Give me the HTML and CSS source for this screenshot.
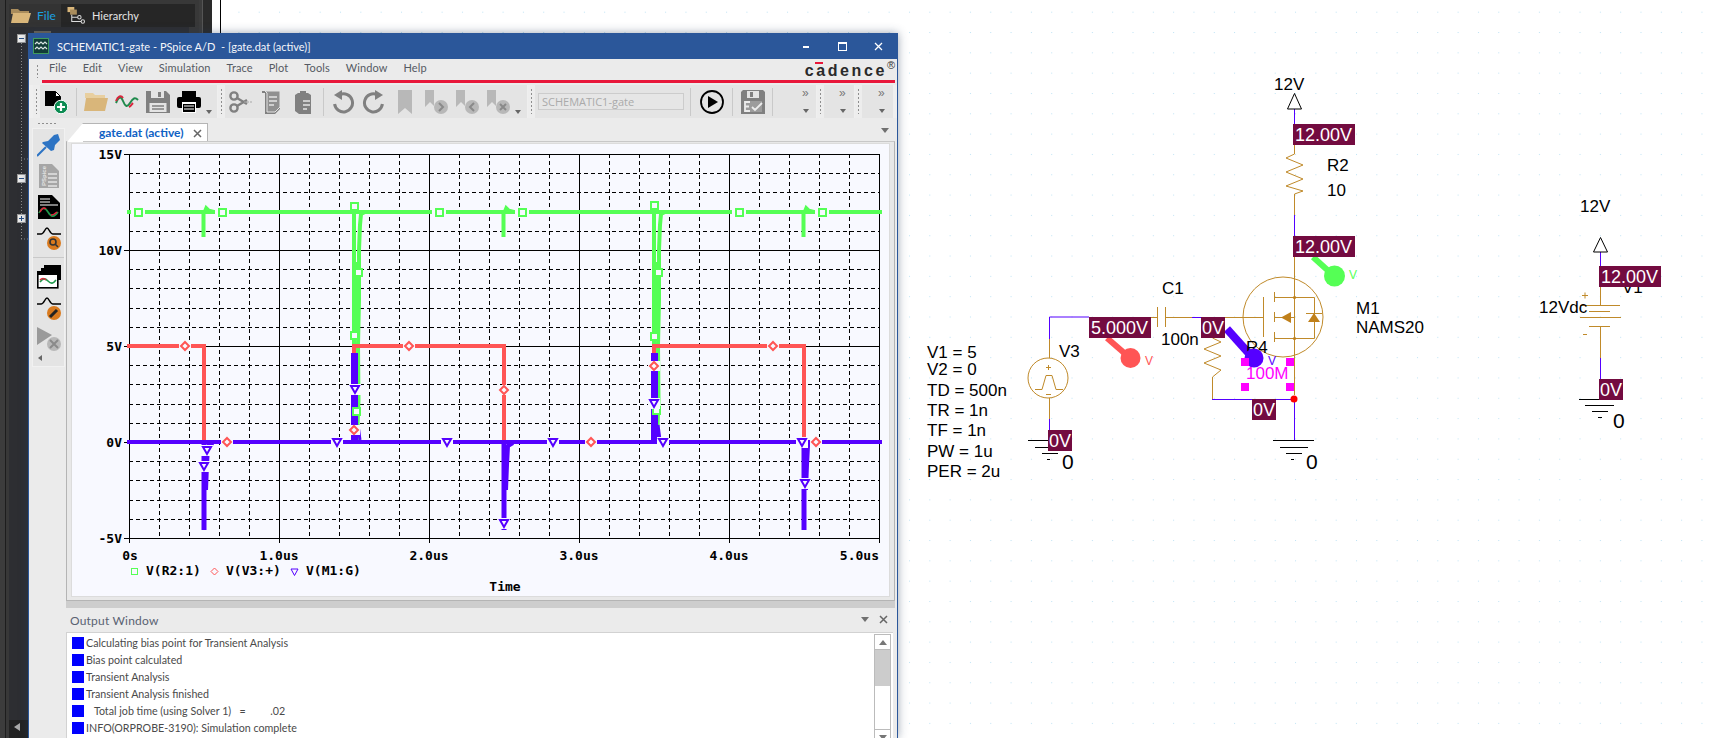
FILE: index.html
```html
<!DOCTYPE html>
<html lang="en">
<head>
<meta charset="utf-8">
<title>SCHEMATIC1-gate - PSpice A/D</title>
<link rel="stylesheet" href="styles.css">
</head>
<body class="page">
<aside class="explorer">
  <div class="explorer-inner">
    <div class="explorer-tabs">
      <div class="ex-tab ex-tab-active">
        <svg class="ex-ico" viewBox="0 0 20 15"><path class="i-folder-back" d="M0 1h7l2 2h9v3H0z"/><path class="i-folder" d="M2 5h18l-3 10H0z"/></svg>
        <span class="ex-file">File</span>
      </div>
      <div class="ex-tab">
        <svg class="ex-ico" viewBox="0 0 20 20"><rect class="i-folder" x="0" y="0" width="8" height="6"/><rect class="i-folder-back" x="3" y="3" width="8" height="6"/><path class="i-tree" d="M5 9v8h11M5 12h7"/><circle class="i-tree" cx="14" cy="12" r="2"/><circle class="i-tree" cx="18" cy="17" r="2"/></svg>
        <span class="ex-hier">Hierarchy</span>
      </div>
    </div>
    <div class="tree">
      <svg class="tree-svg" viewBox="8 27 180 711">
        <rect class="i-folder-dim" x="33" y="31" width="17" height="4"/>
        <path class="tree-line" d="M20.5 43V174M20.5 183V214M20.5 223V239M20 159H28M20 239H28"/>
        <g class="tree-box"><rect x="16.5" y="34.5" width="8" height="8"/><path d="M18 38.5h5"/></g>
        <g class="tree-box"><rect x="16.5" y="174.5" width="8" height="8"/><path d="M18 178.5h5"/></g>
        <g class="tree-box"><rect x="16.5" y="214.5" width="8" height="8"/><path d="M18 218.5h5M20.5 216v5"/></g>
        <rect class="tree-scroll" x="8" y="720" width="180" height="18"/>
        <path class="tree-arrow" d="M19 723v8l-6-4z"/>
      </svg>
    </div>
  </div>
  <div class="explorer-edge"></div>
</aside>

<main class="canvas">
  <svg class="schematic" viewBox="221 0 1492 738">
    <defs>
      <pattern id="dots" x="14.9" y="11.7" width="20.32" height="20.32" patternUnits="userSpaceOnUse"><rect class="dot" width="1" height="1"/></pattern>
    </defs>
    <rect class="sheet" x="221" y="0" width="1492" height="738"/>

    <!-- wires: net colour -->
    <path class="w-net" d="M1294.5 109V124M1294.5 215V236M1049.5 339V317H1089M1192 317.5H1201M1049.5 419V430M1212 399.5H1294.5V440M1600.5 252V266M1600.5 358V379"/>
    <path class="w-part" d="M1294.5 145V154L1286 158L1303 165L1286 172L1303 179L1286 186L1303 191L1294.5 194V215M1294.5 257V395M1151 317.5H1157M1165 317.5H1192M1225 317.5H1263M1157.5 307V327M1165.5 307V327M1049.5 339V358M1049.5 398V419M1212.5 338L1221 342L1204 349L1221 356L1204 363L1221 370L1212.5 377V399"/>
    <path class="w-part" d="M1600.5 287V305M1580 305.5H1620M1589 311.5H1610M1580 317.5H1621M1589 326.5H1610M1600.5 326V358"/>
    <!-- MOSFET -->
    <circle class="w-part" cx="1283" cy="317" r="40"/>
    <path class="w-part" d="M1263.5 297V337M1274.5 292V302M1274.5 312V322M1274.5 332V342M1274 297.5H1314.5V338.5H1274M1274 317.5H1294.5V338M1306 313.5H1322"/>
    <path class="w-fill" d="M1281 317.5L1291 312V323zM1314 313L1308 322H1320z"/>
    <circle class="w-fill" cx="1294.5" cy="297.5" r="1.6"/><circle class="w-fill" cx="1294.5" cy="338.5" r="1.6"/>
    <!-- V3 source -->
    <circle class="w-part" cx="1048" cy="378" r="20"/>
    <path class="w-part" d="M1035 389.5H1042L1046 375.5H1052L1056 389.5H1063M1046 367.5H1051M1048.5 365V370"/>
    <path class="w-part" d="M1046 394.5H1051"/>
    <path class="w-part" d="M1582 295.5H1588M1585 292.5V298.5M1583 334.5H1587"/>
    <circle class="dot-red" cx="1294" cy="399" r="3.5"/>

    <!-- grounds and power symbols -->
    <path class="blk" d="M1273 440.5H1314M1280 447.5H1308M1286 453.5H1302M1291 459.5H1294M1028 440.5H1060M1035 447.5H1050M1042 453.5H1058M1047 459.5H1050M1579 399.5H1600M1585 405.5H1614M1592 411.5H1608M1598 417.5H1602"/>
    <path class="blk-tri" d="M1294.5 93.5L1287.5 109H1301.5zM1600.5 237.5L1593.5 252H1607.5z"/>

    <!-- text -->
    <text class="sc" x="1274" y="90">12V</text>
    <text class="sc" x="1327" y="171">R2</text>
    <text class="sc" x="1327" y="196">10</text>
    <text class="sc" x="1356" y="314">M1</text>
    <text class="sc" x="1356" y="333">NAMS20</text>
    <text class="sc" x="1162" y="294">C1</text>
    <text class="sc" x="1161" y="345">100n</text>
    <text class="sc" x="1059" y="357">V3</text>
    <text class="sc" x="927" y="358">V1 = 5</text>
    <text class="sc" x="927" y="375">V2 = 0</text>
    <text class="sc" x="927" y="396">TD = 500n</text>
    <text class="sc" x="927" y="416">TR = 1n</text>
    <text class="sc" x="927" y="436">TF = 1n</text>
    <text class="sc" x="927" y="457">PW = 1u</text>
    <text class="sc" x="927" y="477">PER = 2u</text>
    <text class="sc sc-big" x="1306" y="469">0</text>
    <text class="sc sc-big" x="1062" y="469">0</text>
    <text class="sc sc-big" x="1613" y="428">0</text>
    <text class="sc" x="1580" y="212">12V</text>
    <text class="sc" x="1539" y="313">12Vdc</text>
    <text class="sc" x="1622" y="293">V1</text>

    <!-- probes -->
    <path class="pr-green" d="M1313 257L1334 276"/><circle class="pf-green" cx="1334.5" cy="276" r="10.5"/>
    <path class="pr-red" d="M1107 338L1130 358"/><circle class="pf-red" cx="1130.5" cy="358" r="10"/>
    <path class="pr-violet" d="M1227 329L1253 358"/>
    <text class="sc" x="1246" y="353">R4</text>
    <circle class="pf-violet" cx="1254" cy="358" r="9.5"/>
    <text class="pt pt-green" x="1349" y="279">V</text>
    <text class="pt pt-red" x="1145" y="365">V</text>
    <text class="pt pt-violet" x="1268" y="365">V</text>

    <!-- selected part -->
    <text class="sc sc-sel" x="1246" y="379">100M</text>
    <rect class="handle" x="1241" y="358" width="8" height="8"/>
    <rect class="handle" x="1286" y="358" width="8" height="8"/>
    <rect class="handle" x="1241" y="383" width="8" height="8"/>
    <rect class="handle" x="1286" y="383" width="8" height="8"/>

    <!-- voltage bubbles -->
    <rect class="bub" x="1293" y="124" width="62" height="21"/><text class="bub-t" x="1295" y="141">12.00V</text>
    <rect class="bub" x="1293" y="236" width="62" height="21"/><text class="bub-t" x="1295" y="253">12.00V</text>
    <rect class="bub" x="1089" y="317" width="62" height="21"/><text class="bub-t" x="1091" y="334">5.000V</text>
    <rect class="bub" x="1201" y="317" width="24" height="21"/><text class="bub-t" x="1202" y="334">0V</text>
    <rect class="bub" x="1252" y="399" width="24" height="21"/><text class="bub-t" x="1253" y="416">0V</text>
    <rect class="bub" x="1048" y="430" width="24" height="21"/><text class="bub-t" x="1049" y="447">0V</text>
    <rect class="bub" x="1599" y="266" width="62" height="21"/><text class="bub-t" x="1601" y="283">12.00V</text>
    <rect class="bub" x="1599" y="379" width="24" height="21"/><text class="bub-t" x="1600" y="396">0V</text>
  </svg>
</main>

<section class="window">
  <header class="titlebar">
    <svg class="app-ico" viewBox="0 0 16 16"><rect class="app-bg" x="0.5" y="0.5" width="15" height="15"/><path class="app-w" d="M2 6l2-2 2 2 2-2 2 2 2-2 2 2M2 11l2-2 2 2 2-2 2 2 2-2 2 2"/></svg>
    <span class="title-text">SCHEMATIC1-gate - PSpice A/D  - [gate.dat (active)]</span>
    <div class="win-btns">
      <span class="btn-min"></span>
      <span class="btn-max"></span>
      <svg class="btn-close" viewBox="0 0 9 9"><path d="M1 1l7 7M8 1l-7 7"/></svg>
    </div>
  </header>

  <nav class="menubar">
    <span class="grip grip-menu"></span>
    <div class="menu-inner">
      <span class="menu-item">File</span><span class="menu-item">Edit</span><span class="menu-item">View</span><span class="menu-item">Simulation</span><span class="menu-item">Trace</span><span class="menu-item">Plot</span><span class="menu-item">Tools</span><span class="menu-item">Window</span><span class="menu-item">Help</span>
      <span class="logo">cadence</span><span class="logo-r">®</span>
    </div>
  </nav>

  <div class="toolbars">
    <div class="tb tb-1">
      <span class="grip"></span>
      <div class="tb-body">
        <span class="cell"><svg class="ico" viewBox="0 0 24 24"><path class="k" d="M1 1h10l6 6v9H1z"/><path class="k-w" d="M11.5 1.500l5 5h-5z"/><circle class="gr-disc" cx="17" cy="17" r="6.800"/><path class="plus" d="M13 17h8M17 13v8"/></svg></span>
        <span class="sep"></span>
        <span class="cell"><svg class="ico" viewBox="0 0 24 24"><path class="i-folder-lt" d="M1 3h8l2 2h10v3H1z"/><path class="i-folder" d="M2 8h22l-3 13H0z"/></svg></span>
        <span class="cell"><svg class="ico" viewBox="0 0 24 24"><path class="wv-g" d="M1 13c3-7 5-7 7-2s4 7 7 2 5-6 8-3"/><path class="wv-r" d="M1 11c2-5 5-6 7-3M14 17c2-1 3-3 4-4"/></svg></span>
        <span class="cell"><svg class="ico" viewBox="0 0 24 24"><path class="g" d="M0 1h20l4 4v18H0z"/><rect class="g-l" x="5" y="1" width="13" height="7"/><rect class="g" x="12" y="2" width="3" height="5"/><rect class="g-l" x="3.500" y="13" width="17" height="9"/><path class="g-s" d="M6 16h12M6 19h12"/></svg></span>
        <span class="cell"><svg class="ico" viewBox="0 0 24 24"><rect class="k" x="5" y="1" width="14" height="6"/><rect class="k" x="0" y="7" width="24" height="11" rx="2"/><rect class="k-wf" x="5" y="12" width="14" height="11"/><rect class="k" x="6" y="14" width="12" height="8"/><path class="k-s" d="M7 16h10M7 19h10"/></svg></span>
        <span class="drop drop-12"></span>
      </div>
    </div>
    <div class="tb tb-2">
      <span class="grip"></span>
      <div class="tb-body">
        <span class="cell"><svg class="ico" viewBox="0 0 24 24"><circle class="g-st" cx="5" cy="6" r="3.600"/><circle class="g-st" cx="5" cy="18" r="3.600"/><path class="g-st" d="M8 8l10 6M8 16l10-6"/><path class="g-st2" d="M15 12h9"/></svg></span>
        <span class="cell cell-copy"><svg class="ico" viewBox="0 0 24 24"><path class="g" d="M2 1h18v18l-5 5H5V3H2z"/><path class="g-lt" d="M5 1h15v16l-5 5H7V3z"/><path class="g-s2" d="M9 7h8M9 11h8M9 15h5"/></svg></span>
        <span class="cell cell-copy"><svg class="ico" viewBox="0 0 24 24"><path class="g" d="M6 3h2V1h6v2h2l3 2v19H7l-4-3V5z"/><path class="g-s2" d="M11 11h7M11 15h7M11 19h4"/></svg></span>
        <span class="sep sep-2"></span>
        <span class="cell"><svg class="ico" viewBox="0 0 24 24"><path class="g-arc" d="M9 4.600A9 9 0 1 1 3.600 14"/><path class="g" d="M11 0v10L3 5z"/></svg></span>
        <span class="cell"><svg class="ico" viewBox="0 0 24 24"><path class="g-arc" d="M15 4.600A9 9 0 1 0 20.400 14"/><path class="g" d="M13 0v10l8-5z"/></svg></span>
        <span class="cell"><svg class="ico" viewBox="0 0 24 24"><path class="bk" d="M5 0h14v24l-7-6-7 6z"/></svg></span>
        <span class="cell"><svg class="ico" viewBox="0 0 24 24"><path class="bk" d="M1 0h9v16l-4-4-5 5z"/><circle class="bk" cx="17" cy="17" r="7"/><path class="bk-a" d="M15 13l4 4-4 4"/></svg></span>
        <span class="cell"><svg class="ico" viewBox="0 0 24 24"><path class="bk" d="M1 0h9v16l-4-4-5 5z"/><circle class="bk" cx="17" cy="17" r="7"/><path class="bk-a" d="M19 13l-4 4 4 4"/></svg></span>
        <span class="cell"><svg class="ico" viewBox="0 0 24 24"><path class="bk" d="M1 0h9v16l-4-4-5 5z"/><circle class="bk" cx="17" cy="17" r="7"/><path class="bk-a" d="M14 14l6 6M20 14l-6 6"/></svg></span>
        <span class="drop drop-10"></span>
      </div>
    </div>
    <div class="tb tb-3">
      <span class="grip"></span>
      <div class="tb-body">
        <span class="combo">SCHEMATIC1-gate</span>
        <span class="sep sep-3"></span>
        <span class="cell cell-play"><svg class="ico" viewBox="0 0 24 24"><circle class="play-c" cx="12" cy="12" r="11"/><path class="k" d="M8 6l10 6-10 6z"/></svg></span>
        <span class="sep sep-4"></span>
        <span class="cell cell-e"><svg class="ico" viewBox="0 0 24 24"><path class="g" d="M2 0h20l2 2v22H0V2z"/><rect class="g-l" x="6" y="1" width="12" height="7"/><rect class="g" x="9" y="2" width="3" height="5"/><path class="g-l2" d="M3 11h18v11H3z"/><path class="g-e" d="M9 12H4v9h5M4 16.500h4M11 17l3 3 7-7"/></svg></span>
        <span class="sep sep-5"></span>
        <span class="overflow ov-3"><span class="chev">»</span><span class="drop"></span></span>
      </div>
    </div>
    <div class="tb tb-4">
      <span class="grip"></span>
      <div class="tb-body tb-narrow"><span class="overflow"><span class="chev">»</span><span class="drop"></span></span></div>
    </div>
    <div class="tb tb-5">
      <span class="grip"></span>
      <div class="tb-body tb-narrow"><span class="overflow"><span class="chev">»</span><span class="drop"></span></span></div>
    </div>
  </div>

  <div class="workspace">
    <div class="dock">
      <span class="grip-h"></span>
      <div class="dock-panel">
        <svg class="d-ico" viewBox="0 0 24 24"><path class="pin" d="M0 23L9 14"/><path class="pin-f" d="M6 9l5-1 6-6 4-1 2 6-5 5-1 5-3 1-9-8z"/></svg>
        <svg class="d-ico" viewBox="0 0 24 24"><path class="g-doc" d="M2 0h13l7 7v17H2z"/><path class="g-s2" d="M11 10h9M11 14h9M11 18h9M11 22h9"/><text class="doc-t" x="-22" y="9" transform="rotate(-90)">PSpice</text></svg>
        <svg class="d-ico" viewBox="0 0 24 24"><path class="k" d="M1 0h14l8 8v16H1z"/><path class="k-ln" d="M3 4h10M3 7h10M3 10h18"/><path class="wv-g2" d="M2 18c3-6 6-6 9-1s6 6 10 0"/><path class="wv-r2" d="M3 17c2-4 4-5 6-3M14 20c2 0 4-1 6-3"/></svg>
        <svg class="d-ico" viewBox="0 0 24 24"><path class="wv-k" d="M0 8h4c3 0 4-6 6-6s3 6 6 6h8"/><circle class="or" cx="17" cy="17" r="7"/><circle class="or-k" cx="16" cy="16" r="3"/><path class="or-k" d="M18 18l3 3"/></svg>
        <span class="dock-sep"></span>
        <svg class="d-ico" viewBox="0 0 24 24"><rect class="k" x="7" y="0" width="17" height="15"/><rect class="k" x="4" y="3" width="17" height="15"/><rect class="k-wb" x="0.800" y="6.800" width="20" height="16"/><path class="k-ln2" d="M1 7h20v3H1z"/><path class="wv-g3" d="M3 17c3-4 5-4 8-1s5 3 8-1"/><path class="wv-r3" d="M3 15c2-2 4-2 6 0"/></svg>
        <svg class="d-ico" viewBox="0 0 24 24"><path class="wv-k" d="M0 8h4c3 0 4-6 6-6s3 6 6 6h8"/><circle class="or" cx="17" cy="17" r="7"/><path class="or-k2" d="M13 21l7-7"/></svg>
        <svg class="d-ico" viewBox="0 0 24 24"><path class="bk-d" d="M0 0l15 8-15 10z"/><circle class="bk" cx="17" cy="17" r="7"/><path class="bk-a" d="M13 13l8 8M21 13l-8 8"/></svg>
        <span class="dock-more"></span>
      </div>
    </div>

    <div class="content">
      <div class="tabstrip">
        <div class="tab">
          <span class="tab-label">gate.dat (active)</span>
          <svg class="tab-x" viewBox="0 0 9 9"><path d="M1 1l7 7M8 1l-7 7"/></svg>
        </div>
        <span class="tab-menu"></span>
      </div>

      <div class="plot-frame">
        <svg class="plot" viewBox="72 144 817 452">
          <defs>
            <g id="m-s"><rect class="halo" x="-7" y="-6" width="14" height="12"/><rect class="mk-g" x="-3.5" y="-3.5" width="7" height="7"/></g>
            <g id="m-sv"><rect class="mk-g" x="-3.5" y="-3.5" width="7" height="7"/></g>
            <g id="m-d"><rect class="halo" x="-6" y="-5" width="12" height="10"/><path class="mk-r" d="M0-4L4 0 0 4-4 0z"/></g>
            <g id="m-t"><rect class="halo" x="-6" y="-5" width="12" height="11"/><path class="mk-v" d="M-4-3H4L0 4z"/></g>
          </defs>
          <path class="grid-d" d="M159.5 154V538M189.5 154V538M219.5 154V538M249.5 154V538M309.5 154V538M339.5 154V538M369.5 154V538M399.5 154V538M459.5 154V538M489.5 154V538M519.5 154V538M549.5 154V538M609.5 154V538M639.5 154V538M669.5 154V538M699.5 154V538M759.5 154V538M789.5 154V538M819.5 154V538M849.5 154V538"/>
          <path class="grid-d" d="M129 173.5H879M129 192.5H879M129 212.5H879M129 231.5H879M129 269.5H879M129 288.5H879M129 308.5H879M129 327.5H879M129 365.5H879M129 384.5H879M129 404.5H879M129 423.5H879M129 461.5H879M129 480.5H879M129 500.5H879M129 519.5H879"/>
          <path class="grid-s" d="M124 154.5H879.5V543M124 250.5H879M124 346.5H879M124 442.5H879M124 538.5H879.5M129.5 154V543M279.5 154V543M429.5 154V543M579.5 154V543M729.5 154V543"/>

          <text class="ax ax-e" x="122" y="159">15V</text>
          <text class="ax ax-e" x="122" y="255">10V</text>
          <text class="ax ax-e" x="122" y="351">5V</text>
          <text class="ax ax-e" x="122" y="447">0V</text>
          <text class="ax ax-e" x="122" y="543">-5V</text>
          <text class="ax ax-m" x="130" y="560">0s</text>
          <text class="ax ax-m" x="279" y="560">1.0us</text>
          <text class="ax ax-m" x="429" y="560">2.0us</text>
          <text class="ax ax-m" x="579" y="560">3.0us</text>
          <text class="ax ax-m" x="729" y="560">4.0us</text>
          <text class="ax ax-e" x="879" y="560">5.0us</text>

          <rect class="lg-g" x="131.5" y="568.5" width="6" height="6"/>
          <path class="lg-r" d="M214.5 568L218 571.5 214.5 575 211 571.5z"/>
          <path class="lg-v" d="M291 569H298L294.5 575.5z"/>
          <text class="ax" x="146" y="575">V(R2:1)</text>
          <text class="ax" x="226" y="575">V(V3:+)</text>
          <text class="ax" x="306" y="575">V(M1:G)</text>
          <text class="ax ax-m" x="505" y="591">Time</text>

          <!-- V(R2:1) -->
          <path class="t-g" d="M127 212H882"/>
          <path class="t-g" d="M203.5 237V212M503.5 237V212M803.5 237V212"/>
          <path class="t-g3" d="M204 212L206 207L209 210L217 212M504 212L506 207L509 210L517 212M804 212L806 207L809 210L817 212"/>
          <path class="t-g" d="M354 205V442M654 205V442"/>
          <path class="t-g" d="M365 212L361 214L360 225L359 250V300L358 345L358.500 400L357 440M665 212L661 214L660 225L659 250V300L658 345L658.500 400L657 440"/>
          <path class="t-g8" d="M356 262V335M656 262V335"/>
          <!-- V(V3:+) -->
          <path class="t-r" d="M127 346H204V442H354V346H504V442H654V346H804V442H882"/>
          <!-- V(M1:G) -->
          <path class="t-v" d="M127 442H882"/>
          <path class="t-v t-v6" d="M354.500 353V442M654.500 353V442"/>
          <path class="t-v t-v5" d="M204 442V530M504 442V530M804 442V530"/>
          <path class="t-v" d="M213 443L208 446L207 465L206 490M513 443L508 446L507 465L506 490M813 443L808 446L807 465L806 490"/>
          <path class="t-v3" d="M358 425L360 440M658 425L660 440"/>

          <use href="#m-s" x="138" y="212"/><use href="#m-s" x="222" y="212"/><use href="#m-s" x="439" y="212"/><use href="#m-s" x="522" y="212"/><use href="#m-s" x="739" y="212"/><use href="#m-s" x="822" y="212"/>
          <use href="#m-sv" x="354" y="206"/><use href="#m-sv" x="358" y="272"/><use href="#m-sv" x="354" y="335"/><use href="#m-sv" x="356" y="411"/>
          <use href="#m-sv" x="654" y="205"/><use href="#m-sv" x="658" y="272"/><use href="#m-sv" x="654" y="336"/><use href="#m-sv" x="656" y="410"/>
          <use href="#m-d" x="185" y="346"/><use href="#m-d" x="227" y="442"/><use href="#m-d" x="409" y="346"/><use href="#m-d" x="504" y="390"/><use href="#m-d" x="354" y="430"/><use href="#m-d" x="591" y="442"/><use href="#m-d" x="773" y="346"/><use href="#m-d" x="654" y="366"/><use href="#m-d" x="816" y="442"/>
          <use href="#m-t" x="337" y="442"/><use href="#m-t" x="447" y="442"/><use href="#m-t" x="355" y="389"/><use href="#m-t" x="504" y="523"/><use href="#m-t" x="553" y="442"/><use href="#m-t" x="663" y="442"/><use href="#m-t" x="802" y="442"/><use href="#m-t" x="654" y="403"/><use href="#m-t" x="805" y="483"/><use href="#m-t" x="207" y="450"/><use href="#m-t" x="204" y="466"/>
        </svg>
      </div>
      <div class="splitter"></div>

      <div class="output">
        <div class="out-head">
          <span class="out-title">Output Window</span>
          <span class="tab-menu"></span>
          <svg class="tab-x out-x" viewBox="0 0 9 9"><path d="M1 1l7 7M8 1l-7 7"/></svg>
        </div>
        <div class="out-body">
          <ul class="out-lines">
            <li class="out-line"><span class="sq"></span>Calculating bias point for Transient Analysis</li>
            <li class="out-line"><span class="sq"></span>Bias point calculated</li>
            <li class="out-line"><span class="sq"></span>Transient Analysis</li>
            <li class="out-line"><span class="sq"></span>Transient Analysis finished</li>
            <li class="out-line"><span class="sq"></span>   Total job time (using Solver 1)   =         .02</li>
            <li class="out-line"><span class="sq"></span>INFO(ORPROBE-3190): Simulation complete</li>
          </ul>
          <div class="scrollbar">
            <span class="sb-btn"><span class="sb-up"></span></span>
            <span class="sb-thumb"></span>
            <span class="sb-track"></span>
            <span class="sb-btn"><span class="sb-down"></span></span>
          </div>
        </div>
      </div>
    </div>
  </div>
</section>
</body>
</html>
```
FILE: styles.css
```css
* { box-sizing: border-box; }
html, body { margin: 0; padding: 0; }
.page {
  position: relative;
  display: flex;
  width: 1713px;
  height: 738px;
  overflow: hidden;
  background: #fff;
  font-family: Lato, "Open Sans", "Liberation Sans", sans-serif;
}

/* left dark project panel */
.explorer { display: flex; width: 212px; height: 738px; background: #3c3c3c; flex: none; }
.explorer-inner { width: 194px; margin-left: 5px; padding: 4px 0 0 3px; background: #383838; border-left: 1px solid #1d1d1d; display: flex; flex-direction: column; }
.explorer-edge { flex: 1; margin-left: 3px; background: #2a2a2a; border-left: 1px solid #555; }
.explorer-tabs { display: flex; height: 23px; background: #262626; width: 186px; }
.ex-tab { display: flex; align-items: center; gap: 6px; padding-left: 2px; height: 23px; font-size: 11px; }
.ex-tab-active { width: 52px; background: #333; }
.ex-tab:last-child { padding-left: 5px; }
.ex-ico { width: 20px; height: 17px; flex: none; }
.ex-file { color: #1ba1e2; font-size: 12px; }
.ex-hier { color: #e4e4e4; }
.tree { flex: 1; width: 180px; background: #2d2e32; }
.tree-svg { display: block; width: 180px; height: 711px; }
.i-folder { fill: #d9b67a; }
.i-folder-lt { fill: #e8cf9f; }
.i-folder-back { fill: #a98c5c; }
.i-folder-dim { fill: #6d6658; }
.i-tree { fill: none; stroke: #ddd; stroke-width: 1.2; }
.tree-line { fill: none; stroke: #8c8c8c; stroke-width: 1; stroke-dasharray: 1 2; }
.tree-box rect { fill: #eee; stroke: #999; }
.tree-box path { stroke: #274f86; fill: none; }
.tree-scroll { fill: #222; }
.tree-arrow { fill: #aaa; }

/* schematic */
.canvas { flex: 1; height: 738px; padding-left: 8px; background: #fff; }
.schematic { display: block; width: 1493px; height: 738px; border-left: 1px solid #000; }
.sheet { fill: url(#dots); }
.dot { fill: #bfe3f4; }
.w-net { fill: none; stroke: #5500ff; stroke-width: 1; }
.w-part { fill: none; stroke: #c08a2a; stroke-width: 1; }
.w-fill { fill: #c0801a; }
.dot-red { fill: #ff0000; }
.blk { fill: none; stroke: #000; stroke-width: 1; }
.blk-tri { fill: #fff; stroke: #000; stroke-width: 1; }
.sc { font-family: "Liberation Sans", Arial, sans-serif; font-size: 17px; fill: #000; }
.sc-big { font-size: 21px; }
.sc-sel { fill: #ff00ff; }
.handle { fill: #ff00ff; }
.bub { fill: #730b40; }
.bub-t { font-family: "Liberation Sans", Arial, sans-serif; font-size: 18px; fill: #fff; }
.pr-green, .pr-red, .pr-violet { fill: none; stroke-width: 6; }
.pr-green { stroke: #55ff55; }
.pr-red { stroke: #ff5555; }
.pr-violet { stroke: #5500ff; stroke-width: 8; }
.pf-green { fill: #55ff55; }
.pf-red { fill: #ff5555; }
.pf-violet { fill: #5500ff; }
.pt { font-family: "Liberation Sans", Arial, sans-serif; font-size: 12px; }
.pt-green { fill: #55ff55; }
.pt-red { fill: #ff5555; }
.pt-violet { fill: #5500ff; }

/* window */
.window {
  position: absolute;
  left: 28px;
  top: 33px;
  width: 870px;
  height: 705px;
  display: flex;
  flex-direction: column;
  background: #ebebeb;
  border: 1px solid #2b579a;
  border-top: 0;
  border-bottom: 0;
  box-shadow: 0 0 9px rgba(40, 60, 90, 0.45);
}
.titlebar { display: flex; align-items: center; height: 26px; flex: none; background: #2b579a; color: #fff; padding-left: 5px; font-size: 12px; margin-left: -1px; }
.app-ico { width: 16px; height: 16px; flex: none; margin-right: 8px; }
.app-bg { fill: #123b38; stroke: #3f9a5c; }
.app-w { fill: none; stroke: #d8e4e0; stroke-width: 1.2; }
.title-text { white-space: pre; font-size: 11px; color: #f4f6fa; }
.win-btns { margin-left: auto; display: flex; align-items: center; padding-right: 14px; }
.btn-min { width: 6px; height: 2px; background: #fff; margin-top: 2px; margin-right: 29px; }
.btn-max { width: 9px; height: 9px; border: 1px solid #fff; border-top-width: 2px; margin-right: 27px; }
.btn-close { width: 9px; height: 9px; }
.btn-close path { fill: none; stroke: #fff; stroke-width: 1.3; }

.menubar { display: flex; height: 26px; flex: none; padding-left: 7px; }
.grip { display: block; width: 3px; flex: none; background-image: radial-gradient(circle, #8e8e8e 1px, transparent 1.1px); background-size: 3px 4px; background-repeat: repeat-y; background-position: 0 0; }
.grip-menu { height: 14px; margin-top: 5px; }
.menu-inner { position: relative; display: flex; align-items: center; height: 24px; width: 853px; margin-left: 3px; padding: 0 0 4px 7px; gap: 16px; border-bottom: 3px solid #e8173a; }
.menu-item { font-size: 11px; color: #555a63; letter-spacing: 0.1px; }
.logo { position: absolute; right: 8px; top: 3px; font-family: "Liberation Sans", Arial, sans-serif; font-weight: 700; font-size: 16px; letter-spacing: 2.6px; color: #2a2a2a; line-height: 18px; }
.logo::before { content: ""; position: absolute; left: 10px; top: 0; width: 8px; height: 2px; background: #e8173a; }
.logo-r { position: absolute; right: 0; top: 1px; font-family: "Liberation Sans", Arial, sans-serif; font-size: 11px; line-height: 11px; color: #333; }

.toolbars { display: flex; height: 33px; flex: none; padding-left: 4px; gap: 1px; background: #efefef; }
.tb { display: flex; align-items: stretch; background: #ededed; }
.tb > .grip { width: 3px; margin: 3px 2px 4px 2px; }
.tb-body { display: flex; align-items: center; background: #e4e4e4; flex: 1; }
.tb-1 { width: 184px; }
.tb-2 { width: 309px; }
.tb-3 { width: 288px; }
.tb-4 { width: 37px; }
.tb-5 { width: 38px; }
.cell { display: flex; justify-content: center; align-items: center; width: 31px; height: 33px; flex: none; }
.cell-copy { width: 32px; }
.ico { width: 24px; height: 24px; display: block; }
.sep { width: 1px; height: 28px; background: #c9c9c9; margin: 0 3px 0 5px; flex: none; }
.sep-2 { margin: 0 3px 0 3px; }
.sep-3 { margin: 0 3px 0 6px; }
.sep-4 { margin: 0 4px 0 3px; }
.sep-5 { margin: 0 0 0 4px; }
.cell-play { width: 35px; }
.cell-e { width: 31px; }
.drop { display: block; width: 0; height: 0; border-left: 3.5px solid transparent; border-right: 3.5px solid transparent; border-top: 4px solid #666; flex: none; }
.drop-12 { margin: 20px 0 0 2px; }
.drop-10 { margin: 20px 0 0 2px; }
.combo { width: 146px; height: 17px; margin-left: 3px; flex: none; border: 1px solid #ccc; background: #e6e6e6; color: #aaa; font-family: "Open Sans", sans-serif; font-size: 11px; line-height: 15px; padding-left: 3px; }
.overflow { margin-left: auto; width: 16px; height: 33px; position: relative; flex: none; }
.ov-3 { margin-left: auto; }
.chev { position: absolute; left: 2px; top: 1px; font-size: 12px; color: #777; line-height: 14px; font-family: "Liberation Sans", sans-serif; }
.overflow .drop { position: absolute; left: 3px; top: 24px; }
.tb-narrow { justify-content: flex-end; padding-right: 1px; }

/* icon fills */
.k { fill: #000; }
.k-w { fill: #fff; stroke: #000; }
.k-wf { fill: #fff; }
.k-wb { fill: #fff; stroke: #000; stroke-width: 1.6; }
.k-s { fill: none; stroke: #fff; stroke-width: 1.2; }
.k-ln { fill: none; stroke: #fff; stroke-width: 1; }
.k-ln2 { fill: #000; }
.gr-disc { fill: #0c8b52; stroke: #fff; stroke-width: 1; }
.plus { fill: none; stroke: #fff; stroke-width: 2.2; }
.wv-g { fill: none; stroke: #1f8a4c; stroke-width: 2; }
.wv-r { fill: none; stroke: #d7263d; stroke-width: 2; }
.wv-g2, .wv-g3 { fill: none; stroke: #1f9a4c; stroke-width: 1.6; }
.wv-r2, .wv-r3 { fill: none; stroke: #e0263d; stroke-width: 1.6; }
.wv-k { fill: none; stroke: #000; stroke-width: 1.4; }
.g { fill: #808080; }
.g-doc { fill: #a6a6a6; }
.doc-t { font-family: "Liberation Sans", sans-serif; font-size: 6px; font-weight: 700; fill: #e4e4e4; }
.g-l { fill: #e4e4e4; }
.g-l2 { fill: #9c9c9c; }
.g-lt { fill: #909090; stroke: #e4e4e4; stroke-width: 1; }
.g-s { fill: none; stroke: #808080; stroke-width: 1.6; }
.g-s2 { fill: none; stroke: #e4e4e4; stroke-width: 1.5; }
.g-e { fill: none; stroke: #ececec; stroke-width: 1.8; }
.g-st { fill: none; stroke: #808080; stroke-width: 2.4; }
.g-st2 { fill: none; stroke: #a8a8a8; stroke-width: 1; stroke-dasharray: 2 1; }
.g-arc { fill: none; stroke: #808080; stroke-width: 3; }
.bk { fill: #b8b8b8; }
.bk-d { fill: #9a9a9a; }
.bk-a { fill: none; stroke: #8a8a8a; stroke-width: 2; }
.play-c { fill: none; stroke: #000; stroke-width: 1.8; }
.pin { fill: none; stroke: #2d74c4; stroke-width: 2; }
.pin-f { fill: #2d74c4; }
.or { fill: #d97a1e; }
.or-k { fill: none; stroke: #333; stroke-width: 1.6; }
.or-k2 { fill: none; stroke: #222; stroke-width: 3; }

/* workspace */
.workspace { flex: 1; display: flex; min-height: 0; }
.dock { width: 37px; flex: none; padding: 4px 2px 0 4px; }
.grip-h { display: block; height: 3px; width: 20px; margin: 0 0 4px 4px; background-image: radial-gradient(circle, #8e8e8e 1px, transparent 1.1px); background-size: 4px 3px; background-repeat: repeat-x; }
.dock-panel { display: flex; flex-direction: column; align-items: center; height: 237px; width: 31px; padding-top: 4px; gap: 7px; background: #e4e4e4; box-shadow: 0 0 0 1px #f1f1f1; position: relative; }
.d-ico { width: 24px; height: 24px; flex: none; display: block; }
.dock-sep { display: block; width: 31px; height: 1px; background: #c9c9c9; margin: 0; flex: none; }
.dock-more { position: absolute; left: 5px; bottom: 5px; width: 0; height: 0; border-top: 3px solid transparent; border-bottom: 3px solid transparent; border-right: 4px solid #666; }

.content { width: 829px; flex: none; display: flex; flex-direction: column; min-height: 0; }
.tabstrip { position: relative; height: 23px; flex: none; padding-left: 16px; }
.tab { position: absolute; left: 16px; top: 5px; width: 126px; height: 18px; display: flex; align-items: center; background: #fff; border: 1px solid #b5b5b5; border-bottom: 0; border-left: 0; padding-left: 17px; font-size: 12px; }
.tab::before { content: ""; position: absolute; left: -15px; top: -1px; width: 0; height: 0; border-right: 16px solid #fff; border-top: 19px solid transparent; }
.tab-label { color: #0f62c4; font-size: 12px; font-weight: 700; white-space: nowrap; }
.tab-x { width: 9px; height: 9px; position: absolute; right: 5px; top: 5px; }
.tab-x path { fill: none; stroke: #666; stroke-width: 1.5; }
.tab-menu { position: absolute; right: 6px; top: 10px; width: 0; height: 0; border-left: 4.5px solid transparent; border-right: 4.5px solid transparent; border-top: 5px solid #707070; }

.plot-frame { height: 460px; flex: none; padding: 2px 5px 4px; background: #e8e8e8; border: 1px solid #b4b4b4; border-top-color: #c8c8c8; }
.plot { display: block; width: 817px; height: 452px; background: #f8f9ff; outline: 1px solid #dcdcdc; }
.grid-d { fill: none; stroke: #000; stroke-width: 1; stroke-dasharray: 4 3; shape-rendering: crispEdges; }
.grid-s { fill: none; stroke: #000; stroke-width: 1; shape-rendering: crispEdges; }
.ax { font-family: "DejaVu Sans Mono", "Liberation Mono", monospace; font-weight: 700; font-size: 13px; fill: #000; }
.ax-e { text-anchor: end; }
.ax-m { text-anchor: middle; }
.t-g, .t-g3, .t-g8 { fill: none; stroke: #55ff55; stroke-width: 4; }
.t-g3 { stroke-width: 2.5; }
.t-g8 { stroke-width: 7; }
.t-r { fill: none; stroke: #ff5555; stroke-width: 4; }
.t-v, .t-v3 { fill: none; stroke: #5500ff; stroke-width: 4; }
.t-v5 { stroke-width: 5; }
.t-v6 { stroke-width: 7; }
.t-v3 { stroke-width: 3; }
.halo { fill: #f8f9ff; }
.mk-g { fill: #f8f9ff; stroke: #55ff55; stroke-width: 2; shape-rendering: crispEdges; }
.mk-r { fill: #f8f9ff; stroke: #ff5555; stroke-width: 2; }
.mk-v { fill: #f8f9ff; stroke: #5500ff; stroke-width: 2; }
.lg-g { fill: none; stroke: #55ff55; stroke-width: 1; }
.lg-r { fill: none; stroke: #ff5555; stroke-width: 1; }
.lg-v { fill: none; stroke: #5500ff; stroke-width: 1; }

.splitter { height: 7px; flex: none; background: #cdcdcd; }
.output { flex: 1; display: flex; flex-direction: column; min-height: 0; }
.out-head { position: relative; height: 24px; flex: none; padding-left: 4px; display: flex; align-items: center; }
.out-title { font-size: 12px; color: #5a6272; letter-spacing: 0.2px; }
.out-head .tab-menu { right: 26px; top: 9px; }
.out-x { right: 7px; top: 7px; }
.out-body { flex: 1; display: flex; min-height: 0; background: #fff; border-top: 1px solid #d2d2d2; border-left: 1px solid #d2d2d2; margin-right: 2px; }
.out-lines { flex: 1; list-style: none; margin: 0; padding: 1px 0 0 5px; }
.out-line { display: flex; align-items: center; height: 17px; font-family: Lato, "Liberation Sans", sans-serif; font-size: 10.7px; color: #4a4a4a; white-space: pre; }
.sq { width: 12px; height: 12px; flex: none; background: #0000ff; margin-right: 2px; }
.scrollbar { width: 17px; flex: none; margin: 1px 2px 0 0; display: flex; flex-direction: column; border-left: 1px solid #bbb; border-right: 1px solid #bbb; }
.sb-btn { height: 16px; flex: none; background: #fff; border-top: 1px solid #bbb; border-bottom: 1px solid #bbb; display: flex; align-items: center; justify-content: center; }
.sb-up { width: 0; height: 0; border-left: 4.5px solid transparent; border-right: 4.5px solid transparent; border-bottom: 5px solid #777; }
.sb-down { width: 0; height: 0; border-left: 4.5px solid transparent; border-right: 4.5px solid transparent; border-top: 5px solid #777; }
.sb-thumb { height: 36px; flex: none; background: #cccccc; }
.sb-track { height: 43px; flex: none; background: #fff; }
```
